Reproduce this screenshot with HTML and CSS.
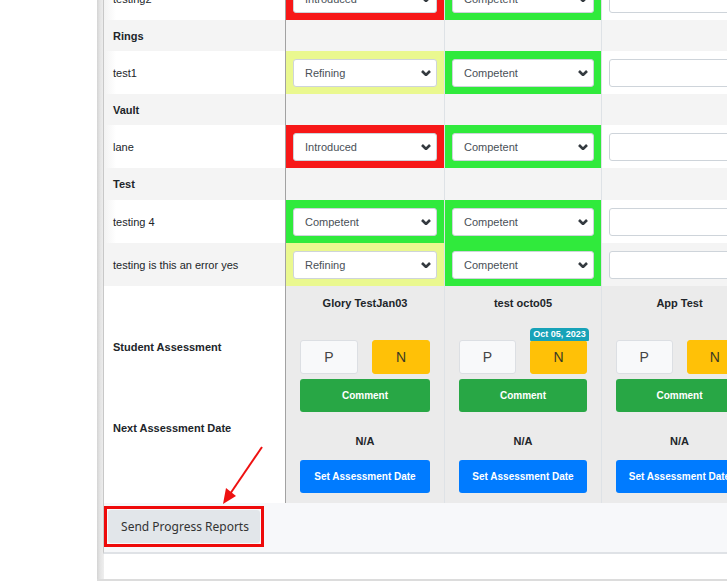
FILE: index.html
```html
<!DOCTYPE html>
<html lang="en">

<head>
    <meta charset="UTF-8">
    <meta name="viewport" content="width=device-width, initial-scale=1.0">
    <title>Progress Report</title>
    <link rel="stylesheet" href="styles.css">
</head>

<body>
    <div class="frame">
        <div class="card">
            <table class="grid">
                <colgroup>
                    <col class="c-label">
                    <col class="c-mid">
                    <col class="c-mid2">
                    <col class="c-end">
                </colgroup>
                <tbody>
                    <tr class="item">
                        <td class="label">testing2</td>
                        <td class="lvl red"><div class="pick"><span>Introduced</span><svg class="chev" viewBox="0 0 10 6"><polyline points="1,1 5,5 9,1"/></svg></div></td>
                        <td class="lvl green"><div class="pick"><span>Competent</span><svg class="chev" viewBox="0 0 10 6"><polyline points="1,1 5,5 9,1"/></svg></div></td>
                        <td class="lvl"><div class="blank"></div></td>
                    </tr>
                    <tr class="group">
                        <td class="label">Rings</td><td></td><td></td><td></td>
                    </tr>
                    <tr class="item">
                        <td class="label">test1</td>
                        <td class="lvl yellow"><div class="pick"><span>Refining</span><svg class="chev" viewBox="0 0 10 6"><polyline points="1,1 5,5 9,1"/></svg></div></td>
                        <td class="lvl green"><div class="pick"><span>Competent</span><svg class="chev" viewBox="0 0 10 6"><polyline points="1,1 5,5 9,1"/></svg></div></td>
                        <td class="lvl"><div class="blank"></div></td>
                    </tr>
                    <tr class="group">
                        <td class="label">Vault</td><td></td><td></td><td></td>
                    </tr>
                    <tr class="item">
                        <td class="label">lane</td>
                        <td class="lvl red"><div class="pick"><span>Introduced</span><svg class="chev" viewBox="0 0 10 6"><polyline points="1,1 5,5 9,1"/></svg></div></td>
                        <td class="lvl green"><div class="pick"><span>Competent</span><svg class="chev" viewBox="0 0 10 6"><polyline points="1,1 5,5 9,1"/></svg></div></td>
                        <td class="lvl"><div class="blank"></div></td>
                    </tr>
                    <tr class="group">
                        <td class="label">Test</td><td></td><td></td><td></td>
                    </tr>
                    <tr class="item">
                        <td class="label">testing 4</td>
                        <td class="lvl green"><div class="pick"><span>Competent</span><svg class="chev" viewBox="0 0 10 6"><polyline points="1,1 5,5 9,1"/></svg></div></td>
                        <td class="lvl green"><div class="pick"><span>Competent</span><svg class="chev" viewBox="0 0 10 6"><polyline points="1,1 5,5 9,1"/></svg></div></td>
                        <td class="lvl"><div class="blank"></div></td>
                    </tr>
                    <tr class="item">
                        <td class="label">testing is this an error yes</td>
                        <td class="lvl yellow"><div class="pick"><span>Refining</span><svg class="chev" viewBox="0 0 10 6"><polyline points="1,1 5,5 9,1"/></svg></div></td>
                        <td class="lvl green"><div class="pick"><span>Competent</span><svg class="chev" viewBox="0 0 10 6"><polyline points="1,1 5,5 9,1"/></svg></div></td>
                        <td class="lvl"><div class="blank"></div></td>
                    </tr>
                </tbody>
                <tfoot>
                    <tr class="assess">
                        <td class="label"><div class="foot-label first">Student Assessment</div></td>
                        <td class="stu">
                            <div class="name">Glory TestJan03</div>
                            <div class="pn"><button class="btn-p">P</button><button class="btn-n">N</button></div>
                            <button class="btn-wide btn-comment">Comment</button>
                        </td>
                        <td class="stu">
                            <div class="name">test octo05</div>
                            <div class="pn"><button class="btn-p">P</button><button class="btn-n"><span class="stamp">Oct 05, 2023</span>N</button></div>
                            <button class="btn-wide btn-comment">Comment</button>
                        </td>
                        <td class="stu">
                            <div class="name">App Test</div>
                            <div class="pn"><button class="btn-p">P</button><button class="btn-n">N</button></div>
                            <button class="btn-wide btn-comment">Comment</button>
                        </td>
                    </tr>
                    <tr class="next">
                        <td class="label"><div class="foot-label">Next Assessment Date</div></td>
                        <td class="stu"><div class="na">N/A</div><button class="btn-wide btn-date">Set Assessment Date</button></td>
                        <td class="stu"><div class="na">N/A</div><button class="btn-wide btn-date">Set Assessment Date</button></td>
                        <td class="stu"><div class="na">N/A</div><button class="btn-wide btn-date">Set Assessment Date</button></td>
                    </tr>
                </tfoot>
            </table>
            <div class="card-foot">
                <div class="mark"><button class="send">Send Progress Reports</button></div>
            </div>
        </div>
    </div>

    <svg class="arrow" width="727" height="582" viewBox="0 0 727 582">
        <line x1="262" y1="447" x2="230" y2="494" />
        <polygon points="223,504 236,496 226,488" />
    </svg>
</body>

</html>
```

FILE: styles.css
```css
body {
    margin: 0;
    overflow: hidden;
    background: #fff;
    font-family: 'Liberation Sans', Arial, sans-serif;
    font-size: 11px;
    color: #212529;
}

.frame {
    margin-left: 97px;
    padding-left: 7px;
    padding-bottom: 25px;
    border-bottom: 2px solid #dcdcdc;
    background: linear-gradient(to right, #d4d4d4 0, #e4e4e4 3px, #efefef 7px, #fff 7px);
}

.card {
    margin-left: -1px;
    border-left: 1px solid #c8c8c8;
    border-bottom: 2px solid #dfe2e6;
    overflow: hidden;
    background: #fff;
}

.grid {
    width: 654px;
    margin-top: -23px;
    table-layout: fixed;
    border-collapse: separate;
    border-spacing: 0;
}

.c-label { width: 182px; }
.c-mid { width: 159px; }
.c-mid2 { width: 157px; }
.c-end { width: 156px; }

.grid td {
    border-right: 1px solid #dee2e6;
    padding: 0 7px;
    vertical-align: middle;
}

.grid td.label {
    border-right-color: #a2a2a2;
    padding-left: 9px;
    background: linear-gradient(to right, #f3f3f3, #fff 12px);
}

.grid tbody tr:nth-child(even) td {
    background: #f4f4f4;
}

.item td {
    height: 43px;
}

.group td {
    height: 31px;
}

.group:nth-child(6) td {
    height: 32px;
}

.group .label {
    font-weight: bold;
}

.lvl.red { background: #f71818 !important; }
.lvl.green { background: #30ea3c !important; }
.lvl.yellow { background: #eaf88f !important; }

.pick {
    height: 28px;
    box-sizing: border-box;
    border: 1px solid #ced4da;
    border-radius: 3px;
    background: #fff;
    display: flex;
    align-items: center;
    justify-content: space-between;
    padding: 0 5px 0 11px;
    color: #495057;
}

.chev {
    width: 10px;
    height: 6px;
    fill: none;
    stroke: #343a40;
    stroke-width: 2.6;
}

.blank {
    height: 28px;
    box-sizing: border-box;
    border: 1px solid #ced4da;
    border-radius: 3px;
    background: #fff;
}

/* footer rows */
.grid tfoot td {
    vertical-align: top;
}

.grid tfoot td.stu {
    background: #ebebeb;
    padding: 0 14px;
    text-align: center;
}

.grid tfoot td.label {
    background: #fff;
}

.foot-label {
    font-weight: bold;
    line-height: 13px;
    padding-top: 7px;
}

.foot-label.first {
    padding-top: 55px;
}

.assess td.stu {
    padding-top: 11px !important;
    padding-bottom: 3px !important;
}

.name {
    font-weight: bold;
    line-height: 13px;
}

.pn {
    display: flex;
    gap: 14px;
    margin-top: 30px;
}

.pn button {
    flex: 1;
    height: 34px;
    border-radius: 3px;
    font-family: 'Liberation Sans', Arial, sans-serif;
    font-size: 14px;
    padding: 0;
}

.btn-p {
    background: #f8f9fa;
    border: 1px solid #dcdfe3;
    color: #444;
}

.btn-n {
    position: relative;
    background: #ffc107;
    border: 1px solid #ffc107;
    color: #3a3a24;
}

.stamp {
    position: absolute;
    left: -1px;
    right: -3px;
    bottom: 100%;
    height: 13px;
    line-height: 13px;
    background: #17a2b8;
    color: #fff;
    font-size: 9px;
    font-weight: bold;
    border-radius: 4px 4px 1px 1px;
}

.btn-wide {
    display: block;
    width: 100%;
    height: 33px;
    border: none;
    border-radius: 3px;
    color: #fff;
    font-family: 'Liberation Sans', Arial, sans-serif;
    font-size: 10px;
    font-weight: bold;
    padding: 0;
    white-space: nowrap;
    overflow: hidden;
}

.btn-comment {
    margin-top: 5px;
    background: #28a745;
}

.next td.stu {
    padding-top: 20px !important;
    padding-bottom: 10px !important;
}

.na {
    font-weight: bold;
    line-height: 13px;
}

.btn-date {
    margin-top: 12px;
    background: #007bff;
}

.card-foot {
    background: #f7f8fa;
    padding: 3px 0 5px 0;
}

.mark {
    display: inline-block;
    border: 3px solid #ee0a0a;
    padding: 1px;
    background: #f7f8fa;
}

.send {
    display: block;
    width: 152px;
    height: 33px;
    border: none;
    border-radius: 3px;
    background: #e2e6ea;
    color: #333;
    font-family: 'Noto Sans', 'Open Sans', sans-serif;
    font-size: 12px;
    padding: 0 0 0 2px;
}

.arrow {
    position: absolute;
    left: 0;
    top: 0;
    pointer-events: none;
}

.arrow line {
    stroke: #ee1111;
    stroke-width: 2;
}

.arrow polygon {
    fill: #ee1111;
}
```
